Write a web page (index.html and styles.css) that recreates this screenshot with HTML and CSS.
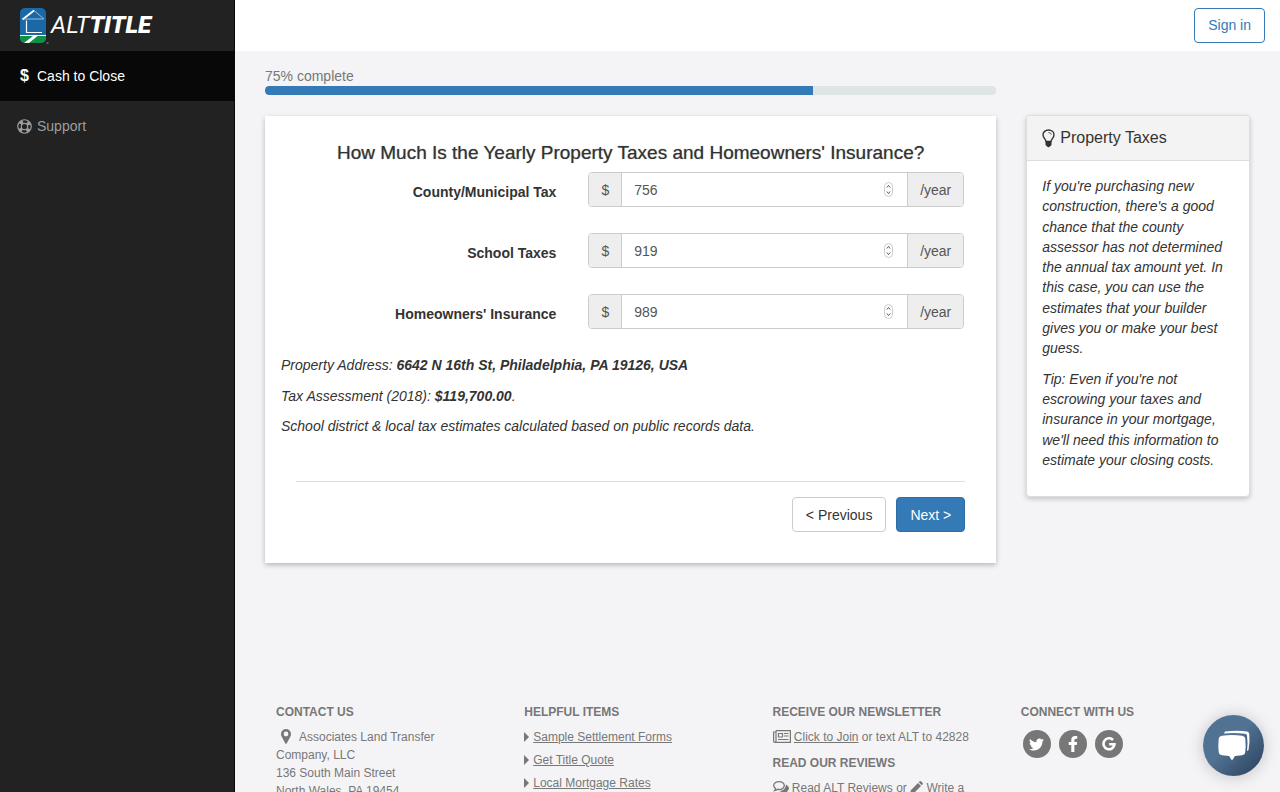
FILE: index.html
```html
<!DOCTYPE html>
<html lang="en">
  <head>
    <meta charset="UTF-8" />
    <meta name="viewport" content="width=device-width, initial-scale=1.0" />
    <title>ALT Title - Cash to Close</title>
    <link rel="stylesheet" href="styles.css">
  </head>
  <body>
    <div class="wrapper">
      <aside class="sidebar">
        <a class="brand" href="#">
          <svg class="brand-mark" viewBox="0 0 29 36" aria-hidden="true">
            <rect width="26" height="35" rx="5" fill="#1b68a6" />
            <path d="M0 28H26V30a5 5 0 0 1-5 5H5a5 5 0 0 1-5-5Z" fill="#129047" />
            <path d="M0 27.500H26" stroke="#fff" />
            <path d="M13 28H17.500L9 35H4Z" fill="#fff" />
            <path d="M14 2.500L2.500 11.500" stroke="#fff" stroke-width="1.800" fill="none" />
            <path d="M14 2.500L24 11M4 11H23.500" stroke="#a9c8e0" stroke-width="0.900" fill="none" />
            <path d="M6.500 12.500V24.500H22" stroke="#fff" stroke-width="1.200" fill="none" />
            <path d="M26.500 35H28.500" stroke="#999" />
          </svg>
          <span class="brand-name">ALT<b>TITLE</b></span>
        </a>
        <nav class="menu">
          <a class="menu-item active" href="#"><span class="menu-icon"><b>$</b></span>Cash to Close</a>
          <a class="menu-item" href="#">
            <span class="menu-icon">
              <svg width="15" height="15" viewBox="0 0 16 16" fill="none" stroke="currentColor" aria-hidden="true">
                <circle cx="8" cy="8" r="7.200" stroke-width="1.300" />
                <circle cx="8" cy="8" r="3.400" stroke-width="1.300" />
                <circle cx="8" cy="8" r="5.300" stroke-width="3.400" stroke-dasharray="3.600 4.725" stroke-dashoffset="-2.400" />
              </svg>
            </span>Support
          </a>
        </nav>
      </aside>

      <div class="page">
        <header class="topbar">
          <button class="btn btn-outline" type="button">Sign in</button>
        </header>

        <main class="content">
          <section class="col-main">
            <div class="progress-label" id="progress-label">75% complete</div>
            <div class="progress" role="progressbar" aria-labelledby="progress-label" aria-valuenow="75" aria-valuemin="0" aria-valuemax="100">
              <div class="progress-bar" style="width: 75%"></div>
            </div>

            <form class="card">
              <h1>How Much Is the Yearly Property Taxes and Homeowners' Insurance?</h1>

              <div class="form-row">
                <label for="county-tax">County/Municipal Tax</label>
                <div class="input-group">
                  <span class="addon">$</span>
                  <input id="county-tax" type="number" value="756">
                  <span class="stepper"><svg width="9" height="15" viewBox="0 0 9 15" aria-hidden="true"><use href="#stepper" /></svg></span>
                  <span class="addon">/year</span>
                </div>
              </div>
              <div class="form-row">
                <label for="school-tax">School Taxes</label>
                <div class="input-group">
                  <span class="addon">$</span>
                  <input id="school-tax" type="number" value="919">
                  <span class="stepper"><svg width="9" height="15" viewBox="0 0 9 15" aria-hidden="true"><use href="#stepper" /></svg></span>
                  <span class="addon">/year</span>
                </div>
              </div>
              <div class="form-row">
                <label for="insurance">Homeowners' Insurance</label>
                <div class="input-group">
                  <span class="addon">$</span>
                  <input id="insurance" type="number" value="989">
                  <span class="stepper"><svg width="9" height="15" viewBox="0 0 9 15" aria-hidden="true"><use href="#stepper" /></svg></span>
                  <span class="addon">/year</span>
                </div>
              </div>

              <div class="notes">
                <p>Property Address: <b>6642 N 16th St, Philadelphia, PA 19126, USA</b></p>
                <p>Tax Assessment (2018): <b>$119,700.00</b>.</p>
                <p>School district &amp; local tax estimates calculated based on public records data.</p>
              </div>

              <div class="actions">
                <button class="btn" type="button">&lt; Previous</button>
                <button class="btn btn-primary" type="button">Next &gt;</button>
              </div>
            </form>
          </section>

          <aside class="col-side">
            <div class="panel">
              <h2>
                <svg width="13" height="19" viewBox="0 0 13 19" aria-hidden="true">
                  <path d="M4 12.500C4 10.500 1 9 1 5.800C1 3 3.500 1 6.500 1S12 3 12 5.800C12 9 9 10.500 9 12.500Z" fill="none" stroke="currentColor" stroke-width="1.400" />
                  <path d="M3.500 12.300H9.500V16L8 17.500Q6.500 19 5 17.500L3.500 16Z" fill="currentColor" />
                  <path d="M6.500 3.500Q9 3.500 9.300 5.600" fill="none" stroke="currentColor" stroke-width="0.800" />
                </svg>
                Property Taxes
              </h2>
              <div class="panel-body">
                <p>If you're purchasing new construction, there's a good chance that the county assessor has not determined the annual tax amount yet. In this case, you can use the estimates that your builder gives you or make your best guess.</p>
                <p>Tip: Even if you're not escrowing your taxes and insurance in your mortgage, we'll need this information to estimate your closing costs.</p>
              </div>
            </div>
          </aside>
        </main>

        <footer class="footer">
          <div class="footer-col">
            <h3>Contact Us</h3>
            <address>
              <svg class="pin" width="10" height="15" viewBox="0 0 10 15" aria-hidden="true">
                <path d="M5 0A5 5 0 0 0 0 5C0 6.500 0.500 7.300 1 8.300L4.200 14.300Q5 15.300 5.800 14.300L9 8.300C9.500 7.300 10 6.500 10 5A5 5 0 0 0 5 0ZM5 2.600A2.400 2.400 0 1 1 5 7.400A2.400 2.400 0 0 1 5 2.600Z" fill="currentColor" fill-rule="evenodd" />
              </svg>Associates Land Transfer Company, LLC<br>
              136 South Main Street<br>
              North Wales, PA 19454
            </address>
          </div>
          <div class="footer-col">
            <h3>Helpful Items</h3>
            <ul>
              <li><a href="#">Sample Settlement Forms</a></li>
              <li><a href="#">Get Title Quote</a></li>
              <li><a href="#">Local Mortgage Rates</a></li>
            </ul>
          </div>
          <div class="footer-col">
            <h3>Receive Our Newsletter</h3>
            <p>
              <svg width="18" height="13" viewBox="0 0 18 13" fill="none" stroke="currentColor" aria-hidden="true">
                <path d="M3 0.600H17.400V12.400H2A1.400 1.400 0 0 1 0.600 11V2H3M3 0.600V11A1.400 1.400 0 0 1 2 12.400" stroke-width="1.200" />
                <path d="M5.500 3.500H9.500V7H5.500ZM11 3.500H15.500M11 6H15.500M5 9.500H15.500" stroke-width="1.200" />
              </svg>
              <a href="#">Click to Join</a> or text ALT to 42828
            </p>
            <h3>Read Our Reviews</h3>
            <p>
              <svg width="16" height="13" viewBox="0 0 16 13" aria-hidden="true">
                <path d="M6 0.700C9 0.700 11.300 2.300 11.300 4.600S9 8.500 6 8.500Q5.200 8.500 4.500 8.300Q3.300 9.500 1.600 9.700Q2.600 8.700 2.600 7.600Q0.700 6.400 0.700 4.600C0.700 2.300 3 0.700 6 0.700Z" fill="none" stroke="currentColor" stroke-width="1.300" />
                <path d="M13 3.500Q16 5 16 7.300Q16 9 14.200 10.300Q14.400 11.500 15.400 12.500Q13.300 12.400 12 11.200Q9 11.700 6.500 10Q12.500 9.600 13 3.500Z" fill="currentColor" />
              </svg>
              <a href="#">Read ALT Reviews</a> or
              <svg width="13" height="13" viewBox="0 0 13 13" aria-hidden="true">
                <path d="M0 13L0.800 9.200L8 2L11 5L3.800 12.200ZM8.700 1.300L9.700 0.300Q10.300-0.200 11 0.300L12.700 2Q13.200 2.700 12.700 3.300L11.700 4.300Z" fill="currentColor" />
              </svg>
              <a href="#">Write a Review</a>
            </p>
          </div>
          <div class="footer-col">
            <h3>Connect With Us</h3>
            <div class="social">
              <a href="#" aria-label="Twitter">
                <svg width="15" height="15" viewBox="0 0 512 512" fill="currentColor"><path d="M459.37 151.716c.325 4.548.325 9.097.325 13.645 0 138.72-105.583 298.558-298.558 298.558-59.452 0-114.68-17.219-161.137-47.106 8.447.974 16.568 1.299 25.34 1.299 49.055 0 94.213-16.568 130.274-44.832-46.132-.975-84.792-31.188-98.112-72.772 6.498.974 12.995 1.624 19.818 1.624 9.421 0 18.843-1.3 27.614-3.573-48.081-9.747-84.143-51.98-84.143-102.985v-1.299c13.969 7.797 30.214 12.67 47.431 13.319-28.264-18.843-46.781-51.005-46.781-87.391 0-19.492 5.197-37.36 14.294-52.954 51.655 63.675 129.3 105.258 216.365 109.807-1.624-7.797-2.599-15.918-2.599-24.04 0-57.828 46.782-104.934 104.934-104.934 30.213 0 57.502 12.67 76.67 33.137 23.715-4.548 46.456-13.32 66.599-25.34-7.798 24.366-24.366 44.833-46.132 57.827 21.117-2.273 41.584-8.122 60.426-16.243-14.292 20.791-32.161 39.308-52.628 54.253z" /></svg>
              </a>
              <a href="#" aria-label="Facebook">
                <svg width="10" height="16" viewBox="0 0 320 512" fill="currentColor"><path d="M279.14 288l14.22-92.66h-88.91v-60.13c0-25.35 12.42-50.06 52.24-50.06h40.42V6.26S260.43 0 225.36 0c-73.22 0-121.08 44.38-121.08 124.72v70.62H22.89V288h81.39v224h100.17V288z" /></svg>
              </a>
              <a href="#" aria-label="Google">
                <svg width="14" height="14" viewBox="0 0 14 14" fill="none" stroke="currentColor" stroke-width="2.600"><path d="M11 3A5.500 5.500 0 1 0 12.500 7.200H7.200" /></svg>
              </a>
            </div>
          </div>
        </footer>
      </div>
    </div>

    <button class="chat" type="button" aria-label="Open chat">
      <svg width="32" height="31" viewBox="0 0 32 31" aria-hidden="true">
        <path d="M7 1.500Q19 0 29 1.500Q31 1.800 31.300 4Q32 12 30.500 20L29 21Q30 12 29 5.500Q28.700 4 27 3.800Q17 2.500 6 3.500Z" fill="#fff" />
        <path d="M4 5.700Q14 4.300 24 5.700Q27 6.200 27.300 9Q28 15.500 27.300 22Q27 24.700 24 25.200L17 26L14 30.500L11 26L4 25.200Q1 24.700 0.700 22Q0 15.500 0.700 9Q1 6.200 4 5.700Z" fill="#fff" />
      </svg>
    </button>

    <!-- shared up/down arrows of the number fields -->
    <svg class="sprite" width="0" height="0" aria-hidden="true">
      <symbol id="stepper" viewBox="0 0 9 15">
        <rect x="0.500" y="0.500" width="8" height="14" rx="4" fill="#fff" stroke="#ccc" />
        <path d="M2.800 5.500L4.500 3.500L6.200 5.500M2.800 9.500L4.500 11.500L6.200 9.500" fill="none" stroke="#555" />
      </symbol>
    </svg>
  </body>
</html>
```
FILE: styles.css
```css
* {
  box-sizing: border-box;
}

body {
  margin: 0;
  font-family: "Liberation Sans", Arial, sans-serif;
  font-size: 14px;
  line-height: 1.45;
  color: #333;
  background-color: #f4f4f6;
}

button,
input {
  font: inherit;
}

.sprite {
  position: absolute;
}

.wrapper {
  display: flex;
  min-height: 100vh;
}

/* sidebar */
.sidebar {
  flex: 0 0 235px;
  background-color: #222;
  border-right: 1px solid #080808;
}

.brand {
  display: flex;
  align-items: center;
  gap: 2px;
  height: 51px;
  padding-left: 20px;
  color: #fff;
  text-decoration: none;
}

.brand-mark {
  width: 29px;
  height: 36px;
}

.brand-name {
  font-family: Roboto, sans-serif;
  font-size: 24px;
  font-style: italic;
  font-weight: 400;
}

.brand-name b {
  font-weight: 900;
}

.menu-item {
  display: flex;
  align-items: center;
  height: 51px;
  padding-left: 17px;
  color: #9d9d9d;
  text-decoration: none;
}

.menu-item.active {
  height: 50px;
  color: #fff;
  background-color: #080808;
}

.menu-icon {
  display: flex;
  justify-content: center;
  width: 15px;
  margin-right: 5px;
}

.menu-icon b {
  font-size: 16px;
}

/* page */
.page {
  flex: 1;
  min-width: 0;
}

.topbar {
  display: flex;
  justify-content: flex-end;
  align-items: center;
  height: 51px;
  padding: 0 15px;
  background-color: #fff;
}

.btn {
  height: 35px;
  padding: 0 13px;
  color: #333;
  background-color: #fff;
  border: 1px solid #ccc;
  border-radius: 4px;
}

.btn-outline {
  color: #337ab7;
  border-color: #337ab7;
}

.btn-primary {
  color: #fff;
  background-color: #337ab7;
  border-color: #2e6da4;
}

.content {
  display: flex;
  align-items: flex-start;
  min-height: 645px;
  padding: 15px 15px 0;
}

.col-main {
  width: 75%;
  padding: 0 15px;
}

.col-side {
  width: 25%;
  padding: 49px 15px 0;
}

.progress-label {
  color: #777;
}

.progress {
  height: 9px;
  margin-bottom: 21px;
  background-color: #dfe5e5;
  border-radius: 4px;
  overflow: hidden;
}

.progress-bar {
  height: 100%;
  background-color: #337ab7;
  border-radius: 4px 0 0 4px;
}

.card {
  padding: 26px 16px 31px;
  background-color: #fff;
  box-shadow: 0 2px 5px rgba(0, 0, 0, 0.25);
}

h1 {
  margin: 0 0 8px;
  font-size: 19px;
  font-weight: 500;
  line-height: 22px;
  text-align: center;
  text-shadow: 0 0 1px rgba(51, 51, 51, 0.6);
}

.form-row {
  display: flex;
  margin-bottom: 26px;
}

.form-row label {
  width: 41.67%;
  padding: 10px 16px 0 0;
  font-weight: bold;
  text-align: right;
}

.input-group {
  display: flex;
  flex: 1;
  height: 35px;
  margin: 0 16px;
  color: #555;
  background-color: #fff;
  border: 1px solid #ccc;
  border-radius: 4px;
  overflow: hidden;
}

.addon {
  display: flex;
  align-items: center;
  padding: 0 12px;
  background-color: #eee;
}

.addon:first-child {
  border-right: 1px solid #ccc;
}

.addon:last-child {
  border-left: 1px solid #ccc;
}

.input-group input {
  flex: 1;
  min-width: 0;
  padding: 0 12px;
  color: #555;
  background: none;
  border: 0;
  outline: 0;
  appearance: textfield;
}

.stepper {
  display: flex;
  align-items: center;
  padding-right: 14px;
}

.notes {
  font-style: italic;
}

.notes p,
.panel-body p {
  margin: 0 0 10px;
}

.actions {
  display: flex;
  justify-content: flex-end;
  gap: 10px;
  margin: 45px 15px 0;
  padding-top: 15px;
  border-top: 1px solid #ddd;
}

.panel {
  background-color: #fff;
  border: 1px solid #ddd;
  border-radius: 4px;
  box-shadow: 0 2px 5px rgba(0, 0, 0, 0.2);
}

.panel h2 {
  display: flex;
  align-items: center;
  gap: 5px;
  height: 45px;
  margin: 0;
  padding: 0 15px;
  font-size: 16px;
  font-weight: normal;
  background-color: #f3f3f3;
  border-bottom: 1px solid #ddd;
  border-radius: 4px 4px 0 0;
}

.panel-body {
  padding: 15px 15px 16px;
  font-style: italic;
}

/* footer */
.footer {
  display: flex;
  padding: 7px 26px 20px;
  font-size: 12px;
  line-height: 18px;
  color: #777;
}

.footer-col {
  flex: 1;
  min-width: 0;
  padding: 0 15px;
}

.footer h3 {
  margin: 0 0 7px;
  font-size: 12px;
  font-weight: bold;
  line-height: 18px;
  text-transform: uppercase;
}

.footer a {
  color: #777;
}

.footer p {
  margin: 0 0 8px;
}

.footer svg {
  vertical-align: -2px;
}

.footer .pin {
  margin: 0 8px 0 5px;
  vertical-align: -3px;
}

address {
  max-width: 180px;
  font-style: normal;
}

.footer ul {
  margin: 0;
  padding: 0;
  list-style: none;
}

.footer li {
  display: flex;
  align-items: center;
  gap: 4px;
  margin-bottom: 5px;
}

.footer li::before {
  content: "";
  border: 5px solid transparent;
  border-left-color: #777;
  border-right: 0;
}

.social {
  display: flex;
  gap: 8px;
  padding: 2px 0 0 2px;
}

.social a {
  display: flex;
  align-items: center;
  justify-content: center;
  width: 28px;
  height: 28px;
  color: #fff;
  background-color: #777;
  border-radius: 50%;
}

.chat {
  position: fixed;
  right: 16px;
  bottom: 16px;
  display: flex;
  align-items: center;
  justify-content: center;
  width: 61px;
  height: 61px;
  padding: 0;
  background: linear-gradient(135deg, #527294 45%, #2f4763 90%);
  border: 0;
  border-radius: 50%;
  box-shadow: 0 1px 16px rgba(0, 0, 0, 0.2);
}
```
